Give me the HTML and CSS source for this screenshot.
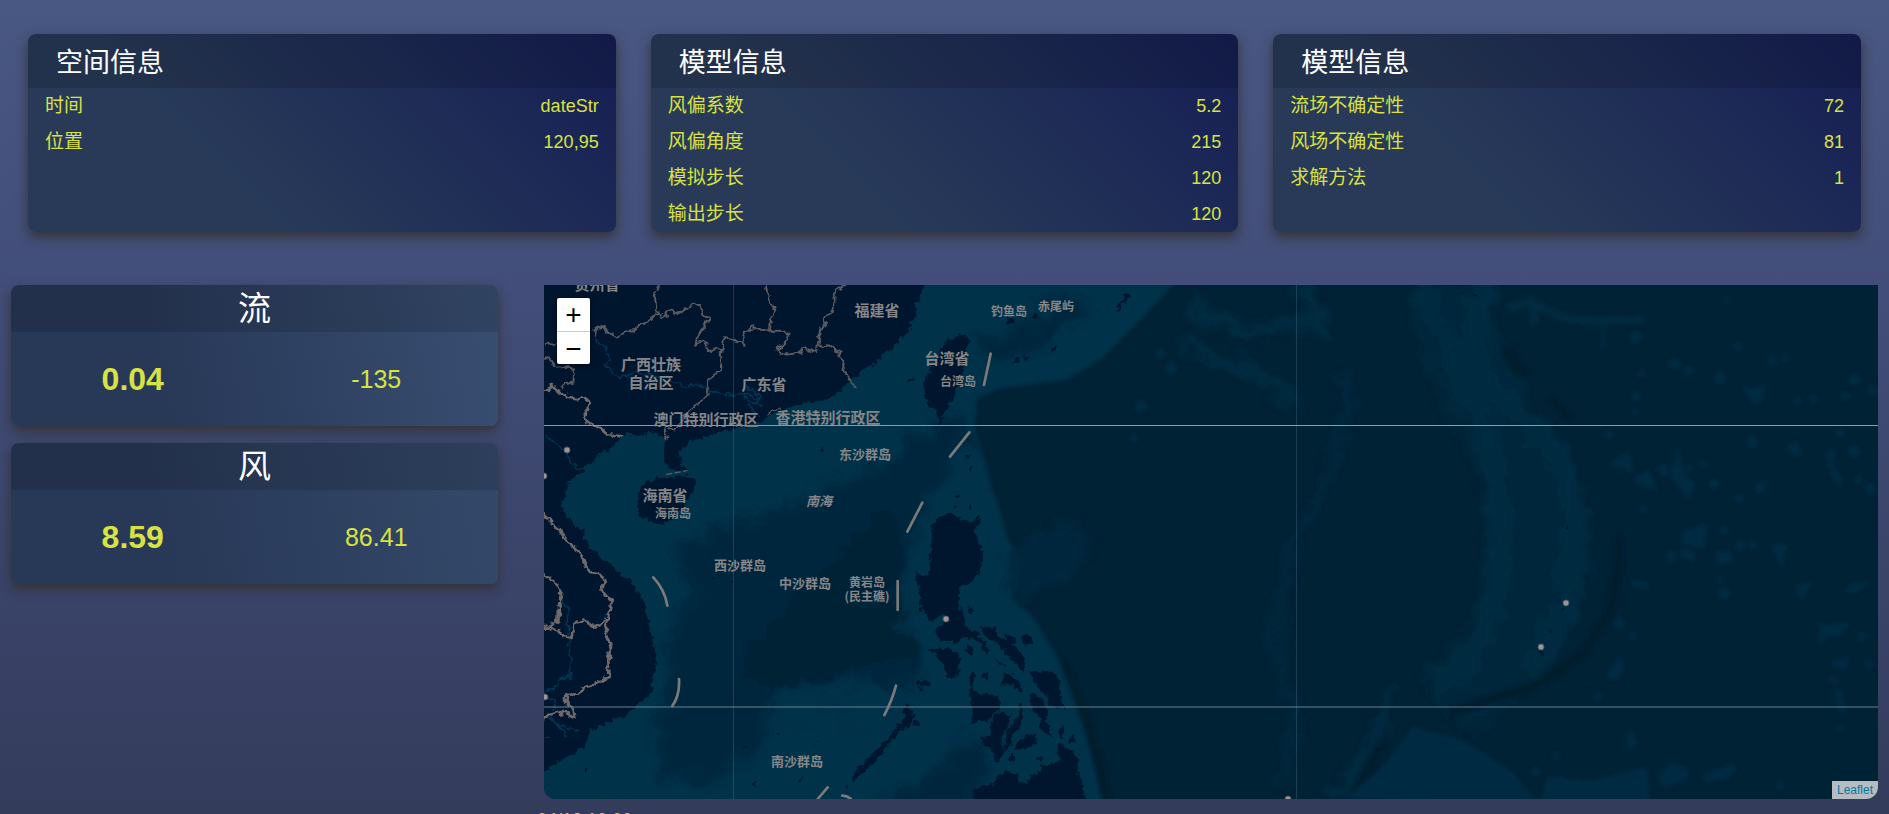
FILE: index.html
```html
<!DOCTYPE html>
<html lang="zh-CN">
<head>
<meta charset="utf-8">
<title>空间信息</title>
<link rel="stylesheet" href="styles.css">
</head>
<body>
<section class="info">
  <article class="card info-card">
    <h2 class="info-title">空间信息</h2>
    <dl class="rows">
      <div class="row"><dt>时间</dt><dd>dateStr</dd></div>
      <div class="row"><dt>位置</dt><dd>120,95</dd></div>
    </dl>
  </article>
  <article class="card info-card">
    <h2 class="info-title">模型信息</h2>
    <dl class="rows">
      <div class="row"><dt>风偏系数</dt><dd>5.2</dd></div>
      <div class="row"><dt>风偏角度</dt><dd>215</dd></div>
      <div class="row"><dt>模拟步长</dt><dd>120</dd></div>
      <div class="row"><dt>输出步长</dt><dd>120</dd></div>
    </dl>
  </article>
  <article class="card info-card">
    <h2 class="info-title">模型信息</h2>
    <dl class="rows">
      <div class="row"><dt>流场不确定性</dt><dd>72</dd></div>
      <div class="row"><dt>风场不确定性</dt><dd>81</dd></div>
      <div class="row"><dt>求解方法</dt><dd>1</dd></div>
    </dl>
  </article>
</section>

<main class="main">
  <div class="gauges">
    <article class="card gauge">
      <h2 class="gauge-title">流</h2>
      <div class="gauge-values"><strong>0.04</strong><span>-135</span></div>
    </article>
    <article class="card gauge gauge-wind">
      <h2 class="gauge-title">风</h2>
      <div class="gauge-values"><strong>8.59</strong><span>86.41</span></div>
    </article>
  </div>

  <div class="map-column">
    <div class="map">
      <svg class="map-canvas" viewBox="0 0 1334 514" role="img" aria-label="地图">
        <defs>
          <filter id="soft" x="-10%" y="-10%" width="120%" height="120%"><feGaussianBlur stdDeviation="7"/></filter>
          <filter id="haze" x="-10%" y="-10%" width="120%" height="120%">
            <feGaussianBlur stdDeviation="12" result="blurred"/>
            <feTurbulence type="fractalNoise" baseFrequency="0.015" numOctaves="3" seed="3"/>
            <feDisplacementMap in="blurred" scale="90" xChannelSelector="R" yChannelSelector="G"/>
          </filter>
          <filter id="coast" x="-5%" y="-5%" width="110%" height="110%">
            <feTurbulence type="fractalNoise" baseFrequency="0.06" numOctaves="2" seed="4"/>
            <feDisplacementMap in="SourceGraphic" scale="26" xChannelSelector="R" yChannelSelector="G"/>
          </filter>
          <filter id="line" x="-5%" y="-5%" width="110%" height="110%">
            <feTurbulence type="fractalNoise" baseFrequency="0.045" numOctaves="2" seed="9"/>
            <feDisplacementMap in="SourceGraphic" scale="26" xChannelSelector="R" yChannelSelector="G"/>
          </filter>
        </defs>
        <rect class="deep" width="1334" height="514"/>

        <!-- sea floor -->
        <g transform="scale(.33333)">
          <path class="shelf" filter="url(#soft)" d="M-40-40H1920L1888 0 1788 105 1668 225 1568 285 1368 310 1300 340 1290 420 1320 520 1338 595 1368 675 1388 755 1440 850 1400 935 1468 995 1538 1115 1588 1185 1628 1335 1688 1590H-40Z"/>
          <g filter="url(#haze)">
            <path class="slope" d="M1128 435 1058 515 858 595 788 655 558 715 438 765 388 815 458 935 368 1035 378 1185 338 1355 338 1465 518 1495 658 1385 678 1235 858 1185 1108 1215 1138 1115 1078 1035 1088 885 1100 760 1200 560 1290 450 1240 380Z"/>
            <path class="slope" d="M1300 170 1420 120 1560 40 1640 60 1500 190 1350 240Z"/>
            <path class="deep" d="M858 965 1058 985 1118 1105 958 1145 678 1215 598 1155 608 1095 700 1000 860 820 1040 660 1070 760 1060 900Z"/>
            <path class="slope" d="M1270 1350 1350 1420 1270 1590H1080L960 1560 1150 1480Z"/>
            <path class="shelf" d="M700 1225 830 1215 850 1290 760 1330 690 1290ZM890 1215 970 1180 1060 1240 1040 1330 900 1320Z"/>
            <path class="slope" d="M1388 810 1480 745 1600 715 1640 790 1540 900 1420 940Z"/>
          </g>
          <g fill="none" filter="url(#haze)">
            <path class="basin" stroke-width="240" d="M2700 0C2760 350 2980 500 2980 760S2860 1120 2700 1260"/>
            <path class="ridge" stroke-width="75" d="M2640 0C2690 120 2720 250 2830 460 2870 620 2880 800 2850 940 2830 1070 2780 1130 2680 1200"/>
            <path class="ridge" stroke-width="80" d="M2820-20C2790 130 2760 230 2850 325 2960 420 3070 500 3085 640 3100 800 3090 920 3040 1010L2960 1180"/>
            <path class="ridge" stroke-width="44" d="M1930 50 2010 105 2120 145 2250 110 2320 130M2280-10 2330 120 2350 160M1930 150 2000 225 2130 260 2260 360"/>
            <path class="ridge-faint" stroke-width="30" d="M2400 250 2405 330 2380 500 2320 640 2250 780 2205 950 2190 1060 2220 1200 2250 1300 2220 1500"/>
            <path class="ridge" stroke-width="40" d="M2535 1210 2500 1360 2440 1460 2360 1540"/>
          </g>
          <g fill="none" filter="url(#soft)">
            <path class="trench" stroke-width="22" d="M3224 755V850L3198 975 3118 1105 2978 1200 2838 1245 2718 1280M2520 1370 2460 1470 2420 1560M1560 1130 1618 1285 1668 1435 1690 1560M2880 190 2945 270M3020 340 3080 400"/>
            <path class="ridge" stroke-width="26" d="M2890 70 2960 50 3060 100 3150 108 3300 105M2970 50V120"/>
            <path class="ridge" stroke-width="10" d="M3178 110V190"/>
          </g>
          <g filter="url(#soft)">
            <path class="ridge-fill" d="M2400 1542 2508 1455 2608 1325 2758 1365 2908 1465 2988 1560ZM2988 1560 3008 1475 3148 1485 3308 1445 3318 1560ZM3340 1480 3380 1430 3430 1450 3430 1480 3360 1510ZM3470 1475 3560 1435 3580 1450 3550 1480 3490 1490Z"/>
            <path class="ridge-fill" d="M3190 540 3255 500 3270 560ZM3265 590 3310 550 3345 620ZM3380 560 3405 480 3415 560 3455 600 3435 645 3390 590ZM3415 740 3490 715 3480 790 3420 780ZM3590 300 3630 310 3665 295 3655 350 3630 360ZM3720 480 3760 470 3775 510 3750 515ZM3845 500 3880 495 3860 530 3895 580 3890 610 3860 570ZM3630 600 3670 585 3660 620 3640 625ZM3515 800 3560 795 3570 830 3520 840ZM3680 780 3730 775 3715 850ZM3920 895 3980 890 3935 925 3900 920ZM3755 900 3805 890 3770 950ZM3860 1010 3920 1015 3880 1060Z"/>
            <path class="ridge-fill" d="M3255 880 3310 895 3320 915 3270 905ZM3410 790 3455 800 3450 830 3410 815ZM3370 800 3395 795 3390 835 3365 830ZM3820 1045 3850 1040 3830 1085ZM3870 1210 3890 1215 3910 1285 3885 1280ZM3815 1010 3875 1030 3915 1010 3905 1035 3850 1060ZM3860 1130 3920 1115 3910 1145 3870 1150ZM3190 1160 3230 1110 3240 1150 3220 1185 3190 1180ZM3110 1180 3140 1195 3135 1200ZM3245 1350 3265 1330 3280 1380 3250 1390Z"/>
            <g class="ridge-fill">
              <circle cx="3392" cy="236" r="18"/><circle cx="3434" cy="258" r="15"/><circle cx="3528" cy="280" r="18"/><circle cx="3276" cy="157" r="18"/><circle cx="3686" cy="228" r="14"/><circle cx="3724" cy="218" r="11"/><circle cx="3583" cy="184" r="13"/><circle cx="3550" cy="44" r="11"/><circle cx="3762" cy="347" r="11"/><circle cx="3808" cy="342" r="12"/><circle cx="3905" cy="334" r="13"/><circle cx="3932" cy="283" r="18"/><circle cx="3986" cy="315" r="14"/><circle cx="3626" cy="471" r="17"/><circle cx="3888" cy="444" r="13"/><circle cx="3930" cy="500" r="18"/><circle cx="3942" cy="585" r="12"/><circle cx="3978" cy="610" r="16"/><circle cx="3293" cy="267" r="11"/><circle cx="3276" cy="335" r="14"/><circle cx="3274" cy="380" r="9"/><circle cx="3195" cy="450" r="12"/><circle cx="3358" cy="555" r="18"/><circle cx="3436" cy="550" r="11"/><circle cx="3476" cy="538" r="11"/><circle cx="3510" cy="598" r="15"/><circle cx="3586" cy="640" r="13"/><circle cx="3298" cy="672" r="12"/><circle cx="3540" cy="735" r="13"/><circle cx="3588" cy="780" r="15"/><circle cx="3624" cy="780" r="13"/><circle cx="3540" cy="925" r="18"/><circle cx="3528" cy="883" r="11"/><circle cx="3226" cy="1015" r="17"/><circle cx="3270" cy="1055" r="11"/><circle cx="3955" cy="1055" r="14"/><circle cx="3975" cy="1138" r="12"/><circle cx="3868" cy="1184" r="12"/><circle cx="3888" cy="1330" r="10"/><circle cx="3708" cy="1500" r="12"/><circle cx="3162" cy="1235" r="12"/><circle cx="2975" cy="1460" r="13"/><circle cx="3036" cy="1412" r="11"/><circle cx="1770" cy="460" r="12"/><circle cx="1790" cy="364" r="18"/><circle cx="1850" cy="205" r="15"/><circle cx="1880" cy="250" r="18"/>
            </g>
          </g>
        </g>

        <!-- land -->
        <g class="land" transform="scale(.33333)" filter="url(#coast)">
          <path d="M-20-20H1165L1128 25 1113 65 1118 95 1098 115V145L1068 155 1043 195 1018 205 998 235 968 245 943 265 908 295 888 325 858 340 808 350 778 355 738 365 708 380 673 395 648 410 618 420 558 435 518 445 478 455 438 470 423 485 403 500 423 555 408 560 378 555 358 525V485L368 465 318 440 288 455 248 445 228 460 208 485 178 500 153 525 128 545 118 560 83 580 68 605 63 635 53 655 68 695 98 725 123 735 118 765 158 805 188 830 228 865 258 885 278 915 303 955 308 995 328 1065 333 1105 340 1145 323 1175V1225L288 1255 258 1285 208 1305 168 1325 143 1335 123 1385 68 1415 18 1445-20 1480Z"/>
          <path d="M283 625 303 595 338 580 388 575 428 567 455 580 456 610 433 635 413 675 388 700 353 720 318 710 288 695 278 655Z"/>
          <path d="M1248 147 1268 153 1281 170 1263 205 1258 245 1248 295 1228 340 1213 360 1200 385 1198 420H1186L1183 390 1163 370 1148 345 1136 325 1143 285 1163 245 1183 215 1198 180 1213 160 1233 158Z"/>
          <path d="M1173 700 1218 685 1258 705 1283 715 1298 693 1308 710 1296 735 1300 765 1320 805 1303 865 1283 890 1253 905 1238 945 1253 975 1263 1025 1298 1045 1323 1075 1338 1105 1323 1107 1308 1075 1283 1060 1258 1055 1238 1075 1208 1070 1178 1060 1176 1025 1198 1020 1203 993 1178 995 1173 1015 1158 1000 1136 985 1128 935 1123 895 1113 885 1118 863 1138 875H1153L1156 835 1163 795V735Z"/>
          <path d="M1153 1087 1218 1090 1248 1120 1243 1165 1223 1187 1208 1165 1193 1135 1173 1110Z"/>
          <path d="M1308 1025 1353 1027 1365 1060 1398 1065 1423 1100 1443 1115 1438 1160 1418 1135 1398 1120 1378 1100 1363 1075 1328 1055ZM1376 1046 1408 1060 1422 1072 1395 1078ZM1453 1160 1508 1155 1538 1170 1548 1205 1553 1255 1563 1270 1518 1265 1508 1235 1488 1215 1468 1185ZM1378 1160 1418 1185 1436 1220 1408 1205 1390 1192 1373 1208Z"/>
          <path d="M1273 1220 1283 1160H1293L1283 1210 1313 1225 1368 1235V1275L1338 1290 1333 1315 1308 1305 1280 1320 1288 1275ZM1343 1295 1373 1280 1400 1290 1393 1325 1373 1355 1380 1395 1368 1430 1353 1425 1343 1400 1313 1375 1318 1360 1343 1350ZM1433 1255 1438 1295 1413 1345 1388 1400 1380 1385 1393 1335 1418 1295ZM1418 1375 1443 1347 1476 1350V1375L1443 1390H1413ZM1463 1235 1498 1245 1511 1285 1508 1315 1528 1360 1498 1340 1486 1295 1463 1265Z"/>
          <path d="M1290 1560 1288 1520 1313 1503 1353 1500 1358 1475 1388 1457 1418 1465 1423 1495H1448L1458 1470 1488 1460V1435L1518 1440 1546 1425 1536 1375 1568 1390 1588 1395 1608 1440 1598 1465 1613 1480 1618 1515 1630 1560Z"/>
          <path d="M1088 1250 1098 1275 1113 1295 1098 1325 1068 1335 1038 1375 988 1435 948 1475 928 1492 923 1475 958 1435 1008 1385 1038 1355 1078 1300ZM903 1500 914 1500 910 1522ZM1710 85 1725 55 1750 25 1757 30 1740 55 1715 80Z"/>
          <circle cx="1278" cy="1095" r="13"/><circle cx="1323" cy="1172" r="10"/><circle cx="1449" cy="1063" r="16"/><circle cx="1403" cy="1418" r="8"/><circle cx="1486" cy="1420" r="7"/><ellipse cx="1551" cy="1340" rx="7" ry="20"/><ellipse cx="1586" cy="1365" rx="7" ry="12"/><ellipse cx="1138" cy="1195" rx="18" ry="10"/><ellipse cx="1131" cy="1215" rx="10" ry="7"/><circle cx="1278" cy="975" r="9"/><circle cx="1470" cy="1233" r="9"/><circle cx="1120" cy="1313" r="9"/><circle cx="1398" cy="107" r="8"/><circle cx="1473" cy="97" r="7"/><ellipse cx="1417" cy="226" rx="10" ry="7"/><circle cx="1446" cy="220" r="7"/><ellipse cx="1529" cy="189" rx="11" ry="5"/><circle cx="1240" cy="632" r="6"/><circle cx="1276" cy="664" r="6"/><circle cx="1235" cy="668" r="5"/><circle cx="1270" cy="518" r="5"/><circle cx="1277" cy="548" r="6"/><circle cx="833" cy="494" r="6"/><circle cx="1100" cy="288" r="7"/><path d="M1350 1120 1385 1145 1376 1145ZM1400 1150 1418 1170 1405 1165ZM1270 1030 1300 1055 1285 1050Z"/>
          <circle cx="2796" cy="31" r="4"/><circle cx="2732" cy="190" r="4"/><circle cx="3059" cy="676" r="4"/><circle cx="3067" cy="727" r="4"/><circle cx="3025" cy="1036" r="5"/><circle cx="2495" cy="1393" r="6"/><circle cx="3056" cy="970" r="5"/><circle cx="2988" cy="1102" r="5"/>
          <circle cx="500" cy="807" r="4"/><circle cx="505" cy="875" r="5"/><circle cx="570" cy="890" r="4"/><circle cx="600" cy="1385" r="5"/><circle cx="630" cy="1495" r="5"/><circle cx="128" cy="1455" r="5"/><circle cx="820" cy="1375" r="4"/><circle cx="700" cy="1345" r="4"/><circle cx="770" cy="1485" r="4"/>
        </g>

        <!-- rivers and borders -->
        <g fill="none" transform="scale(.33333)" filter="url(#line)">
          <path class="river" d="M153 160 188 195 198 230 180 240 223 277 268 263 318 270 388 295 428 303 478 300 498 317 558 330 598 325 648 340M598 325 623 375 648 395M598 300 648 330 640 355 615 345 650 365M0 450 33 473 68 505 93 545 118 555M53 945 73 975 68 1035 78 1055 76 1095 83 1175 48 1180 38 1205 0 1223M8 1235 28 1245 23 1295 48 1325 108 1335M8 1280 68 1357M0 1360 10 1352"/>
          <path class="province" d="M343 0 330 25 338 55 341 83 318 105 303 120H278L276 135 253 137 223 160 198 145 173 123 155 135 153 155M341 83 358 95 383 78 403 87 433 63 468 57 478 90 490 100 483 125 458 155 455 175 483 167 493 195 533 193 543 160 598 177 603 140 628 127 678 140M668 0 676 45 693 75 680 105 678 140H728L733 165 698 195 713 210 758 205 788 190 816 207 818 180M906 0 873 15 870 65 843 105 823 150 820 180 858 185 888 200 903 255 913 285 943 312M533 193 528 225 533 255 493 280 486 340 448 365 418 400 398 430H373L363 465M0 180 38 177M0 220 18 225 33 248 78 245 93 265 88 290 63 295 50 310M668 390 680 378 710 372"/>
          <path class="nation" d="M-20 330 28 303 48 325 78 340 103 343 113 337 140 350 136 370 121 385 133 415 163 430 193 448 235 455M-20 670 18 705 38 725 48 740 73 770 98 795 118 820 123 845 138 860 163 865 188 890 170 915 203 950 193 1000 183 1035 201 1090 193 1135 198 1175 168 1185 143 1205 113 1210 108 1227 70 1230 66 1250 88 1275 93 1297 58 1280 13 1290-20 1320M-20 855 33 890 53 920 46 955 43 1010 18 1025H3L-20 1010M18 1025 58 1050 83 1055 88 1020 118 1005 148 1025 193 1000"/>
        </g>
        <g class="dashes" transform="scale(.33333)">
          <path d="M1340 206 1320 300M1276 442 1218 515M1135 653 1090 740M328 877Q363 915 370 962M405 1182Q408 1230 385 1263M1061 888V975M1056 1202Q1043 1250 1021 1290M851 1507 821 1542M895 1532Q908 1532 920 1541"/>
          <path class="strait" d="M368 568 428 557"/>
        </g>

        <!-- graticule -->
        <g class="graticule">
          <path class="meridian" d="M189.500 0V514M752.500 0V514"/>
          <path class="tropic" d="M0 140.500H1334"/>
          <path class="parallel" d="M0 422H1334"/>
        </g>

        <g class="cities">
          <circle cx="23" cy="165" r="3"/><circle cx="0" cy="191" r="3"/><circle cx="1" cy="412" r="3"/><circle cx="402" cy="334" r="3"/><circle cx="1022" cy="318" r="3"/><circle cx="997" cy="362" r="3"/><circle cx="744" cy="514" r="3"/>
        </g>

        <g class="labels">
          <g class="label-province">
            <text x="53" y="5">贵州省</text>
            <text x="333" y="31">福建省</text>
            <text x="107" y="85">广西壮族</text>
            <text x="107" y="103">自治区</text>
            <text x="220" y="105">广东省</text>
            <text x="403" y="79">台湾省</text>
            <text x="162" y="140">澳门特别行政区</text>
            <text x="284" y="138">香港特别行政区</text>
            <text x="121" y="216">海南省</text>
          </g>
          <g class="label-group">
            <text x="321" y="174">东沙群岛</text>
            <text x="196" y="285">西沙群岛</text>
            <text x="261" y="303">中沙群岛</text>
            <text x="253" y="481">南沙群岛</text>
            <text class="label-sea" x="275" y="221">南海</text>
          </g>
          <g class="label-island">
            <text x="414" y="101">台湾岛</text>
            <text x="465" y="31">钓鱼岛</text>
            <text x="512" y="26">赤尾屿</text>
            <text x="129" y="233">海南岛</text>
            <text x="323" y="302">黄岩岛</text>
            <text x="323" y="316">(民主礁)</text>
          </g>
        </g>
      </svg>
      <div class="zoom">
        <button class="zoom-button" type="button" aria-label="放大">+</button>
        <button class="zoom-button" type="button" aria-label="缩小">−</button>
      </div>
      <a class="attribution" href="#">Leaflet</a>
    </div>
    <time class="clock">04/12 10:00</time>
  </div>
</main>
</body>
</html>
```
FILE: styles.css
```css
* { box-sizing: border-box; }

body {
  margin: 0;
  height: 100vh;
  overflow: hidden;
  padding-top: 34px;
  background: linear-gradient(#495783, #424e79 36%, #343c5c);
  color: #d9e243;
  font-family: "Liberation Sans", "Noto Sans CJK SC", sans-serif;
  font-size: 18px;
}

h2, dl, dd { margin: 0; font-weight: 400; }

.card {
  border-radius: 8px;
  box-shadow: 0 5px 12px rgba(50, 50, 50, .95);
  overflow: hidden;
}

.info {
  display: grid;
  grid-template-columns: repeat(3, 1fr);
  gap: 35px;
  padding: 0 28px;
  margin-bottom: 53px;
}

.info-card {
  background: linear-gradient(45deg, #283a58 33%, #1c2956 75%, #151d52);
}

.info-title {
  height: 54px;
  padding: 4px 28px 0;
  background: rgba(0, 0, 0, .13);
  color: #fff;
  font-size: 27px;
  line-height: 50px;
}

.row {
  display: flex;
  justify-content: space-between;
  height: 36px;
  padding: 0 17px;
  line-height: 36px;
}

.row dt { font-size: 19px; }

.main {
  display: grid;
  grid-template-columns: 487fr 1341fr;
  gap: 39px;
  padding: 0 11px;
}

.gauges {
  display: flex;
  flex-direction: column;
  gap: 17px;
}

.gauge { background: linear-gradient(80deg, #283857 30%, #384e71); }
.gauge-wind { background: linear-gradient(80deg, #283857 30%, #34496a); }

.gauge-title {
  background: rgba(0, 0, 0, .13);
  color: #fff;
  font-size: 33px;
  line-height: 47px;
  height: 47px;
  text-align: center;
}

.gauge-values {
  display: grid;
  grid-template-columns: 1fr 1fr;
  align-items: center;
  height: 94px;
  text-align: center;
  font-size: 25px;
}

.gauge-values strong { font-size: 32px; }

.map {
  position: relative;
  margin-left: 7px;
  border-radius: 0 0 12px 12px;
  overflow: hidden;
}

.map-canvas { display: block; width: 100%; height: auto; }

.deep { fill: #002235; }
.shelf { fill: #003048; }
.slope { fill: #00283e; }
.basin { stroke: #00263a; }
.ridge { stroke: #002b41; }
.ridge-faint { stroke: #00283d; }
.ridge-fill { fill: #002c43; }
.trench { stroke: #001a2b; }
.land { fill: #00172e; }
.river { stroke: #003453; stroke-width: 5; }
.province { stroke: #5c5b61; stroke-width: 6; }
.nation { stroke: #6f6b6c; stroke-width: 8; }
.dashes { fill: none; stroke: #7b7a7b; stroke-width: 8; stroke-linecap: round; }
.strait { stroke: #5d6268; stroke-width: 4; stroke-dasharray: 16 10; }
.graticule { fill: none; stroke-width: 1; }
.meridian { stroke: rgba(110, 160, 190, .24); }
.tropic { stroke: #8c9aae; }
.parallel { stroke: #6b8290; }
.cities { fill: #9c9596; stroke: #555a63; stroke-width: 1; }

.labels {
  fill: #868688;
  font-family: "Noto Sans CJK SC", sans-serif;
  font-weight: 700;
  text-anchor: middle;
}
.label-province { font-size: 15px; }
.label-group { font-size: 13px; }
.label-island { font-size: 12px; }
.label-sea { font-style: italic; }

.zoom {
  position: absolute;
  top: 13px;
  left: 13px;
  width: 33px;
  border-radius: 2px;
  box-shadow: 0 1px 5px rgba(0, 0, 0, .65);
  overflow: hidden;
}

.zoom-button {
  display: block;
  width: 100%;
  height: 33px;
  padding: 0;
  border: 0;
  background: #fff;
  color: #000;
  font: 500 28px/33px "Liberation Sans", sans-serif;
}

.zoom-button + .zoom-button { border-top: 1px solid #ccc; }

.attribution {
  position: absolute;
  right: 0;
  bottom: 0;
  padding: 0 5px;
  background: rgba(255, 255, 255, .7);
  color: #0078a8;
  font-size: 12px;
  line-height: 18px;
  text-decoration: none;
}

.clock {
  display: block;
  margin-top: 11px;
  color: #e6c46c;
  line-height: 21px;
}
```
